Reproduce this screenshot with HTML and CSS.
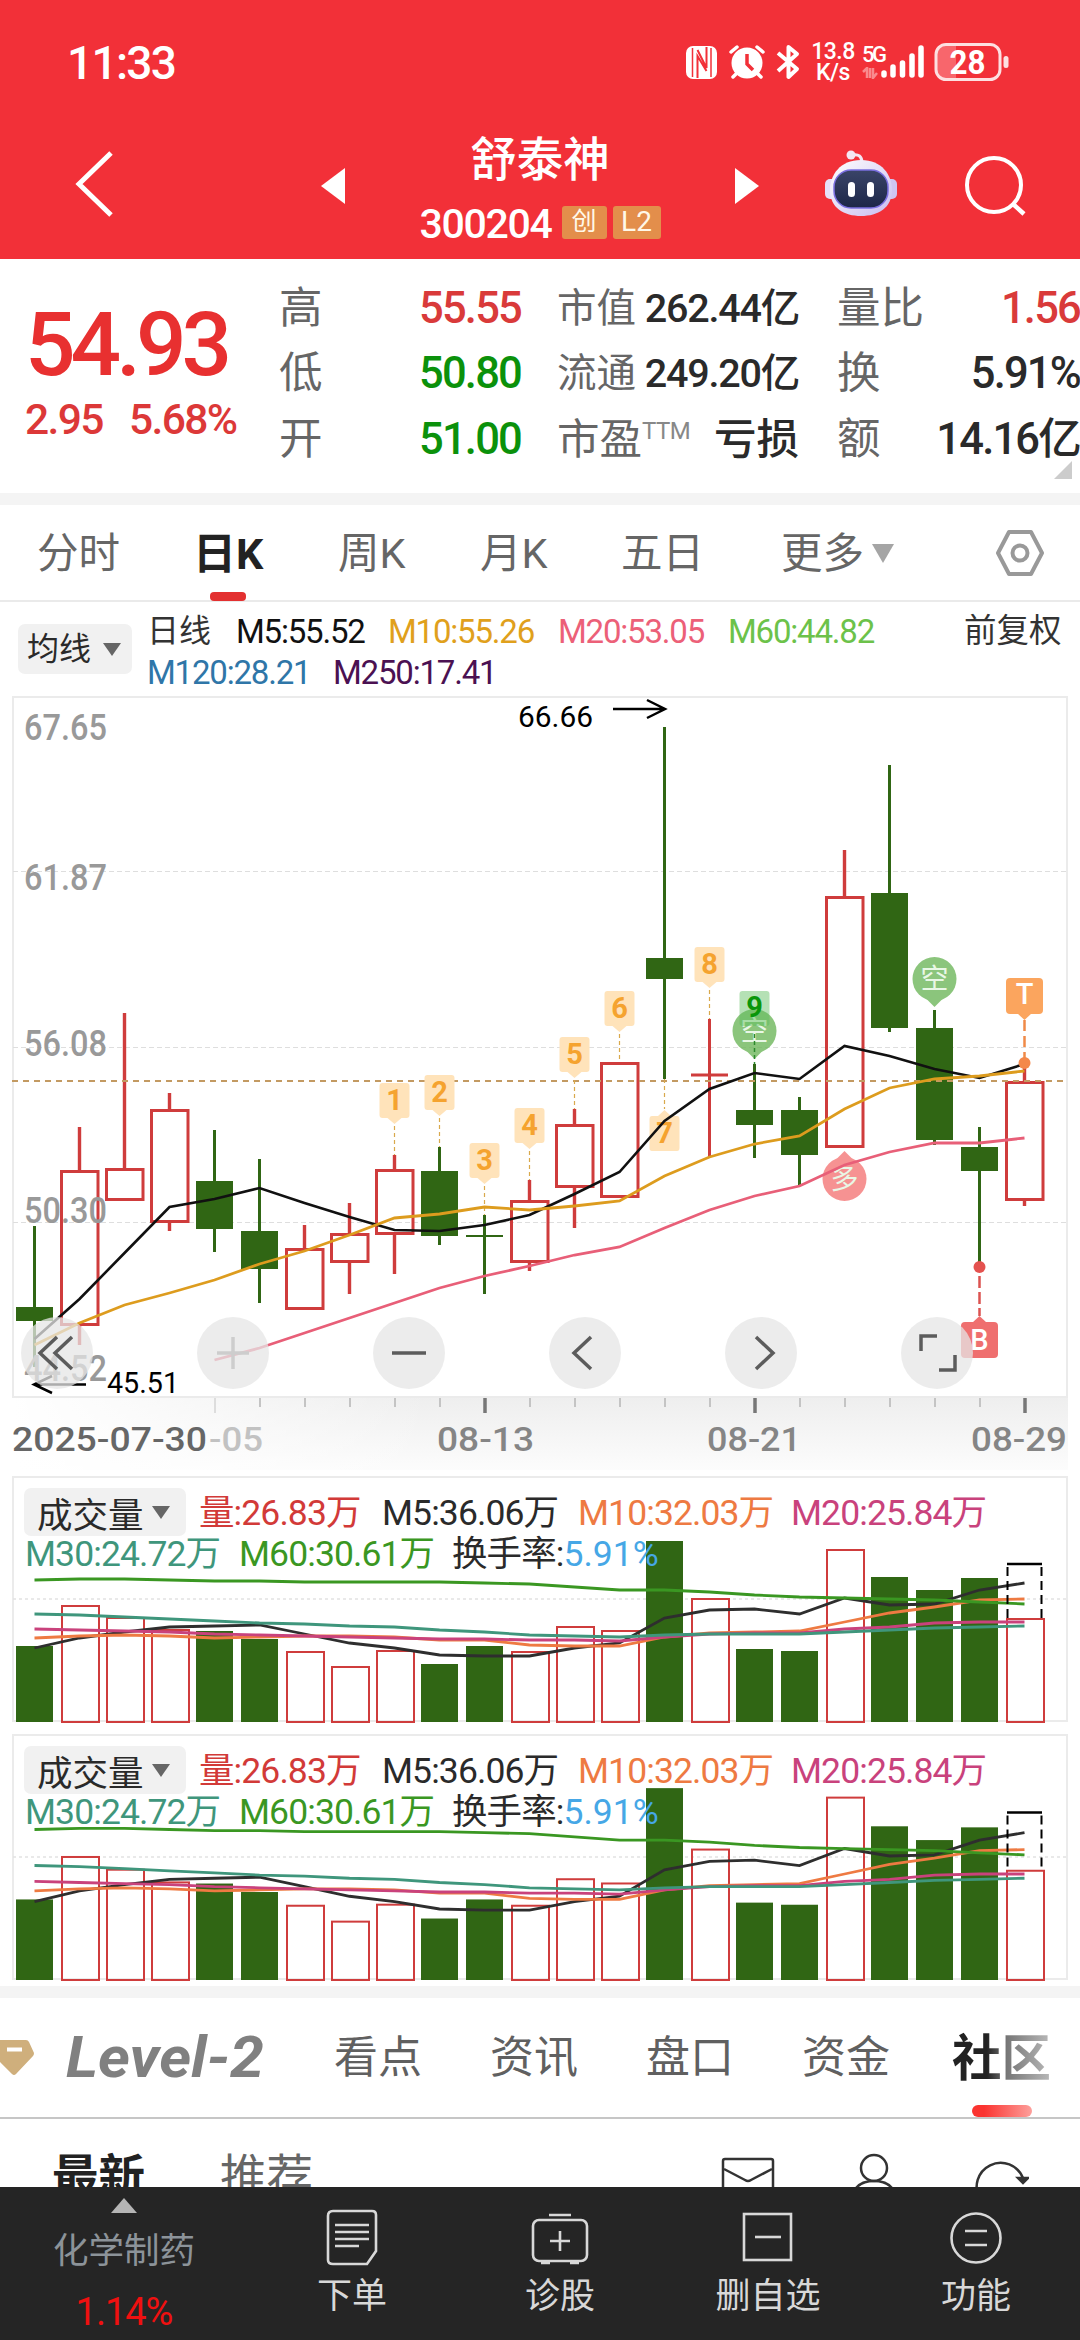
FILE: index.html
```html
<!DOCTYPE html>
<html lang="zh-CN">
<head>
    <meta charset="UTF-8">
    <meta name="viewport" content="width=device-width, initial-scale=1.0">
    <title>舒泰神 300204</title>
    <link rel="stylesheet" href="styles.css">
</head>
<body>
    <header class="header">
        <div class="status-bar">
            <span class="clock">11:33</span>
            <div class="status-icons">
                <svg class="ico-nfc" width="32" height="33" viewBox="0 0 32 33">
                    <rect x="0" y="0" width="31" height="33" rx="7" fill="#fff"/>
                    <path d="M6.5 2 V31 M25 2 V31" stroke="#f23038" stroke-width="1.5"/>
                    <path d="M11.500 32 V10 L20.500 25 M20.500 1 V22 L11.500 4" fill="none" stroke="#f23038" stroke-width="2"/>
                </svg>
                <svg class="ico-alarm" width="36" height="34" viewBox="0 0 36 34">
                    <circle cx="18" cy="18" r="15.5" fill="#fff"/>
                    <path d="M2 7 L8 2 M28 2 L34 7 M8 28 L4 32 M28 28 L32 32" stroke="#fff" stroke-width="3.5" stroke-linecap="round"/>
                    <path d="M18 9 V19 L24 25" fill="none" stroke="#f23038" stroke-width="3.5"/>
                </svg>
                <svg class="ico-bt" width="24" height="36" viewBox="0 0 24 36">
                    <path d="M2 9 L21 25 L12.5 33 V3 L21 10 L2 27" fill="none" stroke="#fff" stroke-width="4" stroke-linejoin="round"/>
                </svg>
                <div class="net-speed"><span>13.8</span><span>K/s</span></div>
                <div class="net-type">
                    <span>5G</span>
                    <svg width="16" height="12" viewBox="0 0 16 12">
                        <path d="M1 5 L5 1 V11 M8 1 V11 M11 1 V11 L15 6" fill="none" stroke="#f98a8e" stroke-width="2.5"/>
                    </svg>
                </div>
                <svg class="ico-signal" width="46" height="36" viewBox="0 0 46 36" stroke="#fff" stroke-width="5.5" stroke-linecap="round">
                    <path d="M4 29 V31 M13 23 V31 M22.5 19 V31 M32 12 V31 M41 4 V31"/>
                </svg>
                <svg class="ico-battery" width="76" height="40" viewBox="0 0 76 40">
                    <path d="M10 3 H22 V37 H10 Q3 37 3 27 V13 Q3 3 10 3" fill="#f8666c"/>
                    <rect x="2" y="2.5" width="64" height="35" rx="10" fill="none" stroke="#fde0e1" stroke-width="3"/>
                    <rect x="69.5" y="14" width="5" height="12" rx="2.5" fill="#fde0e1"/>
                    <text x="33.5" y="32" text-anchor="middle" textLength="36" lengthAdjust="spacingAndGlyphs">28</text>
                </svg>
            </div>
        </div>
        <div class="title-bar">
            <svg class="ico-back" width="40" height="70" viewBox="0 0 40 70">
                <path d="M38 4 L6 35 L38 66" fill="none" stroke="#fff" stroke-width="5"/>
            </svg>
            <svg class="ico-prev" width="24" height="36" viewBox="0 0 24 36"><path d="M24 0 V36 L0 18 Z" fill="#fff"/></svg>
            <div class="stock">
                <div class="stock-name">舒泰神</div>
                <div class="stock-code">
                    <span class="code">300204</span>
                    <span class="tag">创</span>
                    <span class="tag tag-l2">L2</span>
                </div>
            </div>
            <svg class="ico-next" width="24" height="36" viewBox="0 0 24 36"><path d="M0 0 V36 L24 18 Z" fill="#fff"/></svg>
            <svg class="ico-robot" width="74" height="68" viewBox="0 0 74 68">
                <defs>
                    <linearGradient id="shell" x1="0" y1="0" x2="1" y2="1">
                        <stop offset="0" stop-color="#fff"/>
                        <stop offset="1" stop-color="#c9bdf0"/>
                    </linearGradient>
                    <linearGradient id="face" x1="0" y1="0" x2="0" y2="1">
                        <stop offset="0" stop-color="#3a4468"/>
                        <stop offset="1" stop-color="#1d2748"/>
                    </linearGradient>
                </defs>
                <path d="M28 5 Q38 3 38 13" fill="none" stroke="#f4e6f2" stroke-width="3"/>
                <circle cx="27" cy="5" r="4.5" fill="#f4e6f2"/>
                <rect x="1" y="29" width="12" height="20" rx="5" fill="#e6e0f8"/>
                <rect x="61" y="29" width="12" height="20" rx="5" fill="#cfc4f2"/>
                <path d="M37 10 C58 10 68 25 68 40 C68 58 54 66 37 66 C20 66 6 58 6 40 C6 25 16 10 37 10 Z" fill="url(#shell)"/>
                <rect x="10" y="20" width="54" height="38" rx="17" fill="url(#face)" stroke="#7a6fe0" stroke-width="1.5"/>
                <rect x="24" y="32" width="7" height="15" rx="3.5" fill="#fff"/>
                <rect x="43" y="32" width="7" height="15" rx="3.5" fill="#fff"/>
            </svg>
            <svg class="ico-search" width="62" height="62" viewBox="0 0 62 62">
                <circle cx="29" cy="29" r="27" fill="none" stroke="#fff" stroke-width="4"/>
                <path d="M48 48 L59 58" stroke="#fff" stroke-width="4.5"/>
            </svg>
        </div>
    </header>

    <section class="quote">
        <div class="quote-price">
            <div class="price">54.93</div>
            <div class="change"><span>2.95</span><span>5.68%</span></div>
        </div>
        <dl class="quote-col col-range">
            <dt>高</dt><dd class="up">55.55</dd>
            <dt>低</dt><dd class="down">50.80</dd>
            <dt>开</dt><dd class="down">51.00</dd>
        </dl>
        <dl class="quote-col col-cap">
            <dt>市值</dt><dd>262.44亿</dd>
            <dt>流通</dt><dd>249.20亿</dd>
            <dt class="wide">市盈<span class="ttm">TTM</span></dt><dd class="wide">亏损</dd>
        </dl>
        <dl class="quote-col col-turn">
            <dt>量比</dt><dd class="up">1.56</dd>
            <dt>换</dt><dd>5.91%</dd>
            <dt>额</dt><dd>14.16亿</dd>
        </dl>
        <span class="corner"></span>
    </section>

    <nav class="period-tabs">
        <a>分时</a>
        <a class="active">日K</a>
        <a>周K</a>
        <a>月K</a>
        <a>五日</a>
        <a>更多<i class="caret caret-more"></i></a>
        <svg class="ico-hex" width="50" height="46" viewBox="0 0 50 46" fill="none" stroke="#999" stroke-width="4">
            <path d="M14 2 H36 L47 23 L36 44 H14 L3 23 Z" stroke-linejoin="round"/>
            <circle cx="25" cy="23" r="7.5"/>
        </svg>
    </nav>

    <section class="ma-legend">
        <button class="picker">均线<i class="caret"></i></button>
        <div class="ma-values">
            <span class="cn">日线</span>
            <span class="c-black">M5:55.52</span>
            <span class="c-gold">M10:55.26</span>
            <span class="c-pink">M20:53.05</span>
            <span class="c-lime">M60:44.82</span>
            <span class="c-blue">M120:28.21</span>
            <span class="c-purple">M250:17.41</span>
        </div>
        <span class="cn adjust">前复权</span>
    </section>

    <section class="price-chart">
        <svg id="price" width="1080" height="780" viewBox="0 690 1080 780"></svg>
        <div class="chart-tools">
            <button><svg viewBox="0 0 72 72"><path d="M36 20 L19 36 L36 52 M51 20 L34 36 L51 52"/></svg></button>
            <button class="disabled"><svg viewBox="0 0 72 72"><path d="M20 36 H52 M36 20 V52"/></svg></button>
            <button><svg viewBox="0 0 72 72"><path d="M19 36 H53"/></svg></button>
            <button><svg viewBox="0 0 72 72"><path d="M42 20 L25 36 L42 52"/></svg></button>
            <button><svg viewBox="0 0 72 72"><path d="M31 20 L48 36 L31 52"/></svg></button>
            <button><svg viewBox="0 0 72 72"><path d="M36 19 H20 V34 M38 53 H54 V38"/></svg></button>
        </div>
    </section>

    <section class="volume-chart">
        <svg id="volume1" width="1080" height="258" viewBox="0 0 1080 258"></svg>
        <div class="vol-legend">
            <div class="vol-row row-a">
                <button class="picker">成交量<i class="caret"></i></button>
                <span class="c-red">量:26.83万</span>
                <span class="c-dark">M5:36.06万</span>
                <span class="c-orange">M10:32.03万</span>
                <span class="c-magenta">M20:25.84万</span>
            </div>
            <div class="vol-row row-b">
                <span class="c-teal">M30:24.72万</span>
                <span class="c-green">M60:30.61万</span>
                <span class="c-dark">换手率:<b>5.91%</b></span>
            </div>
        </div>
    </section>

    <section class="volume-chart">
        <svg id="volume2" width="1080" height="258" viewBox="0 0 1080 258"></svg>
        <div class="vol-legend">
            <div class="vol-row row-a">
                <button class="picker">成交量<i class="caret"></i></button>
                <span class="c-red">量:26.83万</span>
                <span class="c-dark">M5:36.06万</span>
                <span class="c-orange">M10:32.03万</span>
                <span class="c-magenta">M20:25.84万</span>
            </div>
            <div class="vol-row row-b">
                <span class="c-teal">M30:24.72万</span>
                <span class="c-green">M60:30.61万</span>
                <span class="c-dark">换手率:<b>5.91%</b></span>
            </div>
        </div>
    </section>

    <nav class="info-tabs">
        <svg class="ico-gem" width="36" height="38" viewBox="0 0 36 38">
            <path d="M0 1 H26 Q28 1 29 3 L34 14 Q34 16 33 17 L16 35 Q14 37 12 35 L0 23 Z" fill="#cfaf7c"/>
            <path d="M7 10.5 H22" stroke="#fff" stroke-width="4"/>
        </svg>
        <svg class="level2" width="204" height="50" viewBox="0 0 204 50">
            <text x="0" y="46" textLength="198" lengthAdjust="spacingAndGlyphs">Level-2</text>
        </svg>
        <a>看点</a>
        <a>资讯</a>
        <a>盘口</a>
        <a>资金</a>
        <a class="active">社区</a>
    </nav>

    <section class="feed-tabs">
        <a class="active">最新</a>
        <a>推荐</a>
        <div class="feed-icons">
            <svg width="54" height="44" viewBox="0 0 54 44">
                <rect x="2" y="2" width="50" height="40" rx="2"/>
                <path d="M3 12 L24 23 Q27 25 30 23 L51 12"/>
            </svg>
            <svg width="54" height="50" viewBox="0 0 54 50">
                <circle cx="27" cy="15" r="13"/>
                <path d="M5 48 Q6 28 27 28 Q48 28 49 48"/>
            </svg>
            <svg width="56" height="54" viewBox="0 0 56 54">
                <path d="M7 46 A24 24 0 1 1 50 25"/>
                <path d="M45 25 H55 L50 30 Z" fill="#333"/>
            </svg>
        </div>
    </section>

    <footer class="bottom-bar">
        <div class="sector">
            <i class="caret-up"></i>
            <span class="sector-name">化学制药</span>
            <span class="sector-rate">1.14%</span>
        </div>
        <div class="action">
            <svg width="60" height="60" viewBox="0 0 60 60">
                <path d="M11 4 H50 Q54 4 54 8 V44 L45 57 H11 Q6 57 6 53 V9 Q6 4 11 4 Z"/>
                <path d="M13 18 H47 M13 25 H47 M13 32 H47 M13 39 H37"/>
            </svg>
            <span>下单</span>
        </div>
        <div class="action">
            <svg width="60" height="60" viewBox="0 0 60 60">
                <rect x="3" y="13" width="54" height="41" rx="6"/>
                <path d="M19 8 H41 M20 34 H40 M30 24 V44 M11 56 H20 M40 56 H49"/>
            </svg>
            <span>诊股</span>
        </div>
        <div class="action">
            <svg width="60" height="60" viewBox="0 0 60 60">
                <rect x="6" y="7" width="47" height="46"/>
                <path d="M17 30 H43"/>
            </svg>
            <span>删自选</span>
        </div>
        <div class="action">
            <svg width="60" height="60" viewBox="0 0 60 60">
                <circle cx="30" cy="31" r="24.5"/>
                <path d="M19 24 H41 M19 38 H41"/>
            </svg>
            <span>功能</span>
        </div>
    </footer>

    <script src="chart.js"></script>
</body>
</html>
```

FILE: styles.css
```css
* {
    box-sizing: border-box;
}

body {
    margin: 0;
    width: 1080px;
    height: 2340px;
    overflow: hidden;
    background-color: #fff;
    color: #2a2a2a;
    font-family: Roboto, "Noto Sans CJK SC", sans-serif;
    display: flex;
    flex-direction: column;
}

svg {
    display: block;
    flex: none;
}

button {
    border: none;
    padding: 0;
    font-family: inherit;
    color: inherit;
}

/* Header */
.header {
    height: 259px;
    flex: none;
    background-color: #f23038;
    color: #fff;
}

.status-bar {
    height: 124px;
    padding: 0 70px 0 67px;
    display: flex;
    justify-content: space-between;
    align-items: center;
}

.clock {
    font-size: 46px;
    font-weight: 500;
    letter-spacing: -1.7px;
    padding-top: 1px;
}

.status-icons {
    display: flex;
    align-items: center;
}

.ico-alarm {
    margin-left: 11px;
}

.ico-bt {
    margin-left: 11px;
}

.net-speed {
    display: flex;
    flex-direction: column;
    margin-left: 11px;
    width: 44px;
    font-size: 23px;
    line-height: 21px;
    font-weight: 500;
    letter-spacing: -0.5px;
    text-align: center;
}

.net-type {
    margin: -2px 0 0 7px;
    width: 18px;
    font-size: 22px;
    line-height: 24px;
    font-weight: 500;
    letter-spacing: -2.5px;
}

.ico-battery {
    margin-left: 8px;
    fill: #fff;
    font-size: 33px;
    font-weight: 700;
}

.title-bar {
    height: 135px;
    display: flex;
    align-items: flex-start;
}

.ico-back {
    margin: 25px 0 0 73px;
}

.ico-prev {
    margin: 44px 0 0 208px;
}

.stock {
    width: 390px;
    display: flex;
    flex-direction: column;
    align-items: center;
}

.stock-name {
    height: 70px;
    font-size: 46.5px;
    line-height: 73px;
    font-weight: 500;
}

.stock-code {
    height: 65px;
    display: flex;
    align-items: flex-start;
    padding-top: 12px;
}

.code {
    width: 142px;
    font-size: 41px;
    line-height: 36px;
    font-weight: 500;
    letter-spacing: -1.3px;
}

.tag {
    width: 45px;
    height: 33px;
    border-radius: 3px;
    background-color: #e38e4b;
    font-size: 25px;
    line-height: 32px;
    text-align: center;
    color: #fff8e8;
}

.tag-l2 {
    width: 48px;
    margin-left: 6px;
    font-size: 28px;
}

.ico-next {
    margin-top: 44px;
}

.ico-robot {
    margin: 26px 0 0 65px;
}

.ico-search {
    margin: 32px 0 0 67px;
}

/* Quote panel */
.quote {
    position: relative;
    height: 246px;
    flex: none;
    display: flex;
    border-bottom: 12px solid #f4f4f4;
}

.quote-price {
    width: 280px;
    padding: 44px 0 0 25px;
    color: #e83030;
}

.price {
    height: 84px;
    font-size: 89px;
    line-height: 84px;
    font-weight: 500;
    letter-spacing: -5px;
}

.change {
    display: flex;
    gap: 26px;
    margin-top: 9px;
    font-size: 42.5px;
    line-height: 48px;
    letter-spacing: -1.6px;
    font-weight: 500;
    color: #dc3838;
}

.quote-col {
    margin: 17px 0 0;
    display: grid;
    grid-template-columns: auto auto;
    grid-auto-rows: 65.5px;
    justify-content: space-between;
    align-items: center;
    font-size: 43.5px;
    line-height: 64px;
}

.quote-col dt {
    color: #666;
    white-space: nowrap;
}

.quote-col dd {
    margin: 0;
    font-weight: 500;
    letter-spacing: -1.8px;
    text-align: right;
}

.col-range {
    width: 243px;
}

.col-cap {
    width: 242px;
    margin-left: 36px;
    font-size: 39.5px;
    grid-template-columns: 84px 158px;
}

.col-cap dd {
    letter-spacing: -1.2px;
    white-space: nowrap;
}

.col-cap .wide {
    font-size: 42.5px;
    letter-spacing: 0;
}

.col-cap .ttm {
    font-size: 24px;
    line-height: 1;
    position: relative;
    top: -15px;
    color: #888;
    letter-spacing: -0.5px;
}

.col-turn {
    width: 244px;
    margin-left: 38px;
}

.up {
    color: #d93a3a;
}

.down {
    color: #0b910b;
}

.corner {
    position: absolute;
    right: 8px;
    bottom: 14px;
    border-left: 18px solid transparent;
    border-bottom: 18px solid #ccc;
}

/* Period tabs */
.period-tabs {
    height: 97px;
    flex: none;
    display: grid;
    grid-template-columns: 159px 142px 142px 141px 160px 214px auto;
    align-items: center;
    padding-left: 37px;
    border-bottom: 2px solid #eaeaea;
    font-size: 41.5px;
    color: #666;
}

.period-tabs a {
    height: 95px;
    line-height: 92px;
    display: flex;
    align-items: center;
    padding-top: 2px;
}

.period-tabs .active {
    position: relative;
    margin-left: -3px;
    font-size: 43px;
    font-weight: 700;
    color: #222;
}

.period-tabs .active::after {
    content: "";
    position: absolute;
    left: 17px;
    bottom: -1px;
    width: 36px;
    height: 9px;
    border-radius: 4px;
    background-color: #e33030;
}

.caret {
    border: 9px solid transparent;
    border-top: 13px solid #666;
    border-bottom: 0;
}

.caret-more {
    margin-left: 8px;
    border-width: 19px 11px 0;
    border-top-color: #a5a5a5;
}

/* Moving averages above the chart */
.ma-legend {
    height: 88px;
    flex: none;
    display: flex;
}

.picker {
    display: flex;
    align-items: center;
    justify-content: space-between;
    border-radius: 7px;
    background-color: #f1f1f1;
}

.ma-legend .picker {
    width: 114px;
    height: 50px;
    margin: 22px 0 0 18px;
    padding: 0 11px 0 9px;
    font-size: 32px;
    line-height: 50px;
}

.ma-values {
    width: 760px;
    margin: 9px 0 0 15px;
    display: flex;
    flex-wrap: wrap;
    align-content: flex-start;
    font-size: 33px;
    line-height: 41px;
    letter-spacing: -1.2px;
}

.ma-values span {
    width: 170px;
}

.ma-values .cn {
    width: 89px;
}

.ma-values .c-black {
    width: 152px;
}

.ma-values .c-blue {
    width: 186px;
}

.cn {
    font-size: 32px;
    line-height: 41px;
    letter-spacing: 0;
    color: #333;
}

.adjust {
    margin: 9px 0 0 57px;
    font-size: 32.5px;
}

.c-black { color: #111; }
.c-gold { color: #e0a01c; }
.c-pink { color: #ec6078; }
.c-lime { color: #6cc24a; }
.c-blue { color: #2f76a8; }
.c-purple { color: #4b1152; }
.c-red { color: #d23a38; }
.c-dark { color: #2a2a2a; }
.c-orange { color: #ee7a42; }
.c-magenta { color: #c9427c; }
.c-teal { color: #3f967c; }
.c-green { color: #3a9722; }

/* Charts */
.price-chart {
    position: relative;
    height: 780px;
    flex: none;
}

.chart-tools {
    position: absolute;
    left: 21px;
    top: 627px;
    display: flex;
    gap: 104px;
}

.chart-tools button {
    width: 72px;
    height: 72px;
    border-radius: 50%;
    background-color: rgba(230, 230, 230, 0.75);
}

.chart-tools path {
    fill: none;
    stroke: #5c5c5c;
    stroke-width: 3.5;
}

.chart-tools .disabled path {
    stroke: #cdcdcd;
}

.axis-label {
    font-weight: 500;
}

.volume-chart {
    position: relative;
    height: 258px;
    flex: none;
}

.vol-legend {
    position: absolute;
    left: 24px;
    top: 18px;
}

.vol-row {
    display: grid;
    font-size: 35.5px;
    line-height: 40px;
    letter-spacing: -0.9px;
}

.row-a {
    grid-template-columns: 175px 183px 196px 213px 200px;
    height: 48px;
    line-height: 50px;
}

.row-b {
    grid-template-columns: 214px 213px 220px;
    padding-left: 1px;
    line-height: 36px;
}

.vol-row .picker {
    width: 162px;
    height: 48px;
    padding: 0 16px 0 13px;
    font-size: 35.5px;
    letter-spacing: 0;
}

.vol-row b {
    font-weight: 400;
    letter-spacing: 0;
    color: #46a7e6;
}

/* Info tabs */
.info-tabs {
    height: 133px;
    flex: none;
    display: flex;
    align-items: center;
    border-top: 12px solid #f4f4f4;
    border-bottom: 2px solid #c6c6c6;
    font-size: 44px;
    color: #606060;
}

.info-tabs a {
    width: 156px;
    line-height: 122px;
}

.level2 {
    margin: -3px 64px 0 30px;
    fill: #808080;
    font-family: Roboto, sans-serif;
    font-size: 58px;
    font-weight: 700;
    font-style: italic;
}

.info-tabs .active {
    position: relative;
    width: 100px;
    height: 119px;
    margin-left: -6px;
    font-size: 49.5px;
    font-weight: 700;
    color: transparent;
    background: linear-gradient(90deg, #222 35%, #777 55%, #bbb 100%);
    background-clip: text;
    -webkit-background-clip: text;
}

.info-tabs .active::after {
    content: "";
    position: absolute;
    left: 20px;
    bottom: 0;
    width: 60px;
    height: 12px;
    border-radius: 6px;
    background: linear-gradient(90deg, #fb3430 20%, #fda09c);
}

.feed-tabs {
    height: 68px;
    flex: none;
    overflow: hidden;
    display: flex;
    padding-left: 52px;
    font-size: 46.5px;
    line-height: 68px;
    color: #666;
}

.feed-tabs a {
    width: 168px;
    height: 68px;
    flex: none;
    padding-top: 24px;
}

.feed-tabs .active {
    font-weight: 700;
    color: #222;
}

.feed-icons {
    display: flex;
    margin-left: 333px;
    padding-top: 34px;
}

.feed-icons svg {
    fill: none;
    stroke: #333;
    stroke-width: 2.5;
    margin-top: 4px;
    margin-right: 72px;
}

.feed-icons svg + svg {
    margin-top: 0;
}

/* Bottom bar */
.bottom-bar {
    height: 153px;
    flex: none;
    display: flex;
    background-color: #252525;
    color: #d8d8d8;
}

.sector {
    width: 248px;
    display: flex;
    flex-direction: column;
    align-items: center;
    padding-top: 11px;
}

.caret-up {
    border: 13px solid transparent;
    border-bottom: 15px solid #b5b5b5;
    border-top: 0;
}

.sector-name {
    margin-top: 13px;
    font-size: 35.5px;
    line-height: 50px;
    color: #8c9399;
}

.sector-rate {
    margin-top: 14px;
    font-size: 38px;
    line-height: 44px;
    letter-spacing: -1px;
    color: #f01010;
}

.action {
    width: 208px;
    display: flex;
    flex-direction: column;
    align-items: center;
    padding-top: 20px;
    font-size: 35px;
    line-height: 50px;
}

.action svg {
    fill: none;
    stroke: #d8d8d8;
    stroke-width: 2.6;
    margin-bottom: 5px;
}
```

FILE: chart.js
```js
const RED = '#cf3c3c';
const GREEN = '#306614';
const STEP = 45;
const X0 = 34.5;

const xAt = i => X0 + STEP * i;

// [up, high, bodyTop, bodyBottom, low]
const candles = [
    [0, 1226, 1307, 1321, 1367],
    [1, 1127, 1170, 1326, 1345],
    [1, 1013, 1168, 1201, 1201],
    [1, 1093, 1109, 1223, 1231],
    [0, 1130, 1181, 1229, 1252],
    [0, 1159, 1231, 1269, 1303],
    [1, 1225, 1248, 1310, 1310],
    [1, 1203, 1233, 1263, 1294],
    [1, 1155, 1169, 1235, 1274],
    [0, 1147, 1171, 1236, 1245],
    [0, 1215, 1235, 1237, 1294],
    [1, 1180, 1200, 1263, 1271],
    [1, 1109, 1124, 1188, 1228],
    [1, 1062, 1062, 1198, 1198],
    [0, 727, 958, 979, 1079],
    [1, 1019, 1073.5, 1076.5, 1157],
    [0, 1064, 1110, 1125, 1158],
    [0, 1097, 1110, 1155, 1185],
    [1, 850, 896, 1148, 1148],
    [0, 765, 893, 1028, 1032],
    [0, 1010, 1028, 1140, 1145],
    [0, 1127, 1147, 1171, 1267],
    [1, 1064, 1081, 1201, 1206]
];

const ma5 = [1339, 1299, 1253, 1207, 1199, 1188, 1203, 1217, 1230, 1231, 1225, 1215, 1194, 1172, 1121, 1089, 1073, 1079, 1046, 1056, 1069, 1078, 1064];
const ma10 = [1345, 1323, 1305, 1293, 1280, 1264, 1251, 1235, 1218, 1214, 1207, 1210, 1206, 1201, 1176, 1157, 1144, 1136, 1109, 1088, 1079, 1076, 1071];
const ma20 = [1360, 1348, 1333, 1318, 1303, 1288, 1276, 1266, 1255, 1247, 1228, 1210, 1196, 1186, 1165, 1152, 1143, 1143, 1138];

function line(values, color, start, width) {
    const points = values.map((y, i) => `${xAt(i + start)},${y}`).join(' ');
    return `<polyline points="${points}" fill="none" stroke="${color}" stroke-width="${width}"/>`;
}

function label(text, x, y, width, size, color, extra) {
    return `<text x="${x}" y="${y}" font-size="${size}" fill="${color}" textLength="${width}" lengthAdjust="spacingAndGlyphs" ${extra || ''}>${text}</text>`;
}

function candle(c, i) {
    const [up, high, top, bottom, low] = c;
    const x = xAt(i);
    const color = up ? RED : GREEN;
    let out = '';
    if (!up || bottom - top < 4) {
        out += `<path d="M${x} ${high} V${low}" stroke="${color}" stroke-width="3"/>`;
        out += `<rect x="${x - 18.5}" y="${top}" width="37" height="${bottom - top}" fill="${color}"/>`;
    } else {
        out += `<path d="M${x} ${high} V${top} M${x} ${bottom} V${low}" stroke="${color}" stroke-width="3.4"/>`;
        out += `<rect x="${x - 18}" y="${top + 1.5}" width="36.5" height="${bottom - top - 3}" fill="none" stroke="${color}" stroke-width="3"/>`;
    }
    return out;
}

// Numbered flag above a candle, its dashed stem ends at the wick
function flag(n, i, top, end, fill, color) {
    const x = xAt(i);
    return `<path d="M${x - 12} ${top} H${x + 12} Q${x + 15} ${top} ${x + 15} ${top + 3} V${top + 32} Q${x + 15} ${top + 35} ${x + 12} ${top + 35} H${x + 7} L${x} ${top + 41} L${x - 7} ${top + 35} H${x - 12} Q${x - 15} ${top + 35} ${x - 15} ${top + 32} V${top + 3} Q${x - 15} ${top} ${x - 12} ${top} Z" fill="${fill}"/>
        <path d="M${x} ${top + 43} V${end}" stroke="#d9a94c" stroke-width="1.2" stroke-dasharray="4 3"/>
        <text x="${x}" y="${top + 27}" font-size="29" font-weight="700" fill="${color}" text-anchor="middle">${n}</text>`;
}

function balloon(text, i, cy, dir, fill) {
    const x = xAt(i);
    return `<g opacity="0.8"><circle cx="${x}" cy="${cy}" r="22" fill="${fill}"/>
        <path d="M${x - 8} ${cy + dir * 20} L${x} ${cy + dir * 28} L${x + 8} ${cy + dir * 20} Z" fill="${fill}"/></g>
        <text x="${x}" y="${cy + 10}" font-size="28" fill="#e9f7e6" text-anchor="middle">${text}</text>`;
}

function drawPrice() {
    let out = `<defs>
        <linearGradient id="band" x1="0" y1="0" x2="0" y2="1"><stop offset="0" stop-color="#eee"/><stop offset="1" stop-color="#fcfcfc"/></linearGradient>
        <linearGradient id="fade"><stop offset="0" stop-color="#fff"/><stop offset="1" stop-color="#fff" stop-opacity="0"/></linearGradient>
    </defs>
    <rect x="13" y="1397" width="1055" height="73" fill="url(#band)"/>
    <rect x="13" y="1397" width="420" height="73" fill="url(#fade)"/>
    <rect x="13" y="697" width="1054" height="700" fill="#fff" stroke="#ebebeb" stroke-width="2"/>`;

    [871.5, 1047.5, 1222.5].forEach(y => {
        out += `<path d="M13 ${y} H1067" stroke="#dedede" stroke-width="1.2" stroke-dasharray="5 3"/>`;
    });

    out += candles.map(candle).join('');
    out += '<path d="M12 1081 H1067" stroke="#c39a62" stroke-width="1.8" stroke-dasharray="6 5"/>';

    [['67.65', 740], ['61.87', 890], ['56.08', 1056], ['50.30', 1223], ['44.52', 1381]].forEach(([t, y]) => {
        out += label(t, 24, y, 83, 37, '#999', 'class="axis-label"');
    });

    out += flag(1, 8, 1083, 1155, '#ffe3ba', '#f5a32f');
    out += flag(2, 9, 1075, 1147, '#ffe3ba', '#f5a32f');
    out += flag(3, 10, 1143, 1215, '#ffe3ba', '#f5a32f');
    out += flag(4, 11, 1108, 1180, '#ffe3ba', '#f5a32f');
    out += flag(5, 12, 1037, 1109, '#ffe3ba', '#f5a32f');
    out += flag(6, 13, 991, 1062, '#ffe3ba', '#f5a32f');
    out += flag(8, 15, 947, 1019, '#ffe3ba', '#f5a32f');
    out += `<path d="M664.5 1079 V1109" stroke="#d9a94c" stroke-width="1.2" stroke-dasharray="4 3"/>
        <path d="M652 1116 H658 L664.5 1110 L671 1116 H677 Q679.5 1116 679.5 1119 V1148 Q679.5 1151 677 1151 H652 Q649.5 1151 649.5 1148 V1119 Q649.5 1116 652 1116 Z" fill="#ffe3ba"/>
        <text x="664.5" y="1143" font-size="29" font-weight="700" fill="#f5a32f" text-anchor="middle">7</text>`;

    out += balloon('空', 16, 1031, 1, '#6fb75c');
    out += `<rect x="739.5" y="991" width="30" height="35" rx="3" fill="#5cbc5c" opacity="0.45"/>
        <text x="754.5" y="1017" font-size="29" font-weight="700" fill="#0a960a" text-anchor="middle">9</text>`;
    out += balloon('空', 20, 979, 1, '#6fb75c');
    out += balloon('多', 18, 1179, -1, '#f57878');
    out += '<path d="M754.5 1034 V1064" stroke="#2c8a2c" stroke-width="1.5" stroke-dasharray="4 3"/>';

    out += line(ma5, '#111', 0, 2.6);
    out += '<circle cx="1024.5" cy="1063" r="6" fill="#f4884a"/>';
    out += line(ma10, '#dd9c1e', 0, 2.8);
    out += line(ma20, '#e85f78', 4, 2.8);

    // T and B trade markers
    out += `<rect x="1006" y="978" width="37" height="36" rx="4" fill="#fba55e"/>
        <path d="M1017 1013 H1032 L1024.5 1020 Z" fill="#fba55e"/>
        <path d="M1024.5 1020 V1058" stroke="#f08a48" stroke-width="2.5" stroke-dasharray="11 5"/>
        <text x="1024.5" y="1004" font-size="29" font-weight="500" fill="#fff" text-anchor="middle">T</text>
        <circle cx="979.5" cy="1267" r="6" fill="#e4524f"/>
        <path d="M979.5 1276 V1316" stroke="#dc5350" stroke-width="2.5" stroke-dasharray="12 4"/>
        <path d="M972 1323 H987 L979.5 1316 Z" fill="#ef6f6f"/>
        <rect x="961" y="1322" width="37" height="36" rx="4" fill="#ef6f6f"/>
        <text x="979.5" y="1350" font-size="29" font-weight="500" fill="#fff" text-anchor="middle">B</text>`;

    // Highest and lowest price of the visible range
    out += label('66.66', 518, 727, 75, 29, '#000');
    out += '<path d="M613 709 H665 M647 700 L665 709 L647 718" fill="none" stroke="#000" stroke-width="2.5"/>';
    out += label('45.51', 107, 1393, 72, 29, '#000');
    out += '<path d="M86 1384.5 H34 M52 1376 L34 1384.5 L52 1393" fill="none" stroke="#000" stroke-width="2.5"/>';

    for (let i = 4; i < 23; i++) {
        const major = i === 10 || i === 16 || i === 22;
        const color = major ? '#777' : (i === 4 ? '#ddd' : '#c4c4c4');
        const h = major || i === 4 ? 15 : 9;
        out += `<path d="M${xAt(i) + 0.5} 1398 v${h}" stroke="${color}" stroke-width="${major ? 3.5 : 2}"/>`;
    }
    out += label('2025-07-30', 12, 1451, 195, 34, '#666', 'class="axis-label"');
    out += label('-05', 209, 1451, 54, 34, '#c2c2c2', 'class="axis-label"');
    out += label('08-13', 437, 1451, 97, 34, '#858585', 'class="axis-label"');
    out += label('08-21', 707, 1451, 94, 34, '#858585', 'class="axis-label"');
    out += label('08-29', 971, 1451, 96, 34, '#858585', 'class="axis-label"');
    document.getElementById('price').innerHTML = out;
}

// Bar heights, measured on the first volume pane
const bars = [76, 117, 105, 93, 91, 83, 71, 56, 72, 58, 76, 71, 96, 92, 181, 124, 73, 71, 173, 145, 132, 144, 104];
const volLines = [
    [[74, 84, 90, 95, 96, 97, 88, 79, 74, 67, 66, 66, 74, 79, 104, 112, 113, 108, 124, 117, 118, 132, 139], '#2e2e2e'],
    [[84, 86, 87, 86, 84, 85, 86, 86, 85, 82, 82, 77, 76, 76, 85, 89, 90, 91, 100, 109, 115, 122, 123], '#ee7a42'],
    [[93, 92, 91, 90, 88, 87, 86, 85, 84, 83, 83, 82, 82, 81, 85, 88, 89, 89, 93, 95, 99, 100, 100], '#c9427c'],
    [[108, 107, 105, 103, 101, 99, 98, 96, 95, 92, 90, 87, 86, 85, 87, 88, 88, 88, 90, 92, 94, 95, 96], '#3f967c'],
    [[142, 143, 143, 142, 141, 141, 140, 140, 140, 140, 139, 138, 135, 132, 132, 130, 127, 125, 124, 123, 122, 120, 118], '#3a9722']
];

function drawVolume(id, scale) {
    const base = 252;
    let out = `<rect x="13" y="7" width="1054" height="244" fill="none" stroke="#ebebeb" stroke-width="2"/>
        <path d="M13 129 H1067" stroke="#e2e2e2" stroke-width="1.5" stroke-dasharray="3 3"/>`;
    bars.forEach((v, i) => {
        const h = v * scale;
        if (candles[i][0]) {
            out += `<rect x="${xAt(i) - 17.5}" y="${base - h + 1}" width="37" height="${h - 1}" fill="none" stroke="${RED}" stroke-width="2"/>`;
        } else {
            out += `<rect x="${xAt(i) - 18.5}" y="${base - h}" width="37" height="${h}" fill="${GREEN}"/>`;
        }
    });
    volLines.forEach(([values, color]) => {
        out += line(values.map(v => base - v * scale), color, 0, 2.8);
    });
    // Projected volume of the current day
    const top = base - 158 * scale;
    out += `<path d="M1007 ${top} H1042" stroke="#000" stroke-width="2.5"/>
        <path d="M1007.5 ${top + 3} V${base - 104 * scale} M1041.5 ${top + 3} V${base - 104 * scale}" stroke="#000" stroke-width="2" stroke-dasharray="9 5"/>`;
    document.getElementById(id).innerHTML = out;
}

drawPrice();
drawVolume('volume1', 1);
drawVolume('volume2', 1.06);
```
